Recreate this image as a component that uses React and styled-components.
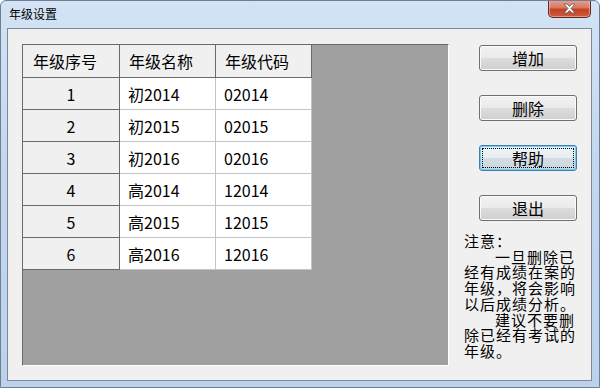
import React from 'react';
import styled, { createGlobalStyle } from 'styled-components';

const GlobalStyle = createGlobalStyle`
  html, body {
    margin: 0;
    padding: 0;
    background: #ffffff;
  }
  body {
    font-family: "Noto Sans CJK SC", "Liberation Sans", sans-serif;
  }
`;

const Window = styled.div`
  width: 600px;
  height: 388px;
  box-sizing: border-box;
  display: flex;
  flex-direction: column;
  background: linear-gradient(180deg, #d3e3f5 0%, #c3d8ef 40%, #bcd2eb 100%);
  border: 1px solid #6e7f94;
  border-radius: 6px 6px 0 0;
  overflow: hidden;
`;

const TitleBar = styled.div`
  height: 27px;
  display: flex;
  align-items: flex-start;
  justify-content: space-between;
  padding-left: 8px;
  padding-right: 8px;
`;

const Title = styled.div`
  font-size: 12px;
  line-height: 12px;
  margin-top: 7px;
  color: #000;
`;

const CloseButton = styled.div`
  width: 43px;
  height: 18px;
  margin-top: -1px;
  box-sizing: border-box;
  border: 1px solid #5a2b24;
  border-top: none;
  border-radius: 0 0 5px 5px;
  background: linear-gradient(180deg, #e8a393 0%, #d9785f 45%, #c44327 55%, #cf5a3c 100%);
  box-shadow: inset 0 0 0 1px rgba(255, 210, 200, 0.5);
  display: flex;
  align-items: center;
  justify-content: center;
`;

const Frame = styled.div`
  flex: 1;
  display: flex;
  padding: 0 7px 6px 6px;
`;

const Client = styled.div`
  flex: 1;
  box-sizing: border-box;
  border: 1px solid #7d8a99;
  background: #f0f0f0;
  display: flex;
  align-items: flex-start;
  padding: 15px 0 0 14px;
`;

const Grid = styled.div`
  width: 427px;
  height: 322px;
  box-sizing: border-box;
  background: #a0a0a0;
  border-top: 1px solid #6a6a6a;
  border-left: 1px solid #6a6a6a;
  border-right: 1px solid #ffffff;
  border-bottom: 1px solid #ffffff;
  display: flex;
  flex-direction: column;
  align-items: flex-start;
`;

const Row = styled.div`
  display: flex;
  height: ${(p) => (p.$header ? 33 : 32)}px;
`;

const Cell = styled.div`
  box-sizing: border-box;
  width: ${(p) => p.$w}px;
  height: 100%;
  display: flex;
  align-items: center;
  justify-content: ${(p) => (p.$center ? 'center' : 'flex-start')};
  padding-left: ${(p) => (p.$center ? 0 : p.$pad)}px;
  font-size: 16px;
  color: #000;
  background: ${(p) => (p.$fixed ? '#f0f0f0' : '#ffffff')};
  border-right: 1px solid ${(p) => (p.$fixed ? '#6a6a6a' : '#c4c4c4')};
  border-bottom: 1px solid ${(p) => (p.$fixed ? '#6a6a6a' : '#c4c4c4')};
  white-space: nowrap;
`;

const Side = styled.div`
  width: 113px;
  margin-left: 15px;
  padding-top: 1px;
  display: flex;
  flex-direction: column;
`;

const Buttons = styled.div`
  display: flex;
  flex-direction: column;
  gap: 24px;
  padding-left: 15px;
`;

const Button = styled.div`
  position: relative;
  width: 98px;
  height: 26px;
  box-sizing: border-box;
  border: 1px solid ${(p) => (p.$focus ? '#3c7fb1' : '#707070')};
  border-radius: 3px;
  background: ${(p) =>
    p.$focus
      ? 'linear-gradient(180deg, #eef3f6 0%, #e6ecf0 50%, #d4dde3 51%, #ccd6dc 100%)'
      : 'linear-gradient(180deg, #f2f2f2 0%, #ebebeb 50%, #dddddd 51%, #cfcfcf 100%)'};
  box-shadow: ${(p) =>
    p.$focus ? 'inset 0 0 0 1px #6fd0f5' : 'inset 0 0 0 1px #fbfbfb'};
  display: flex;
  align-items: center;
  justify-content: center;
  font-size: 16px;
  color: #000;

  &::after {
    content: '';
    display: ${(p) => (p.$focus ? 'block' : 'none')};
    position: absolute;
    inset: 2px;
    border: 1px dotted #000;
  }
`;

const Note = styled.div`
  margin-top: 12px;
  font-size: 15px;
  letter-spacing: 1px;
  line-height: 15.7px;
  color: #000;
  white-space: nowrap;
`;

const NoteLine = styled.div`
  padding-left: ${(p) => (p.$indent ? 31 : 0)}px;
`;

const columns = [
  { title: '年级序号', w: 97 },
  { title: '年级名称', w: 96 },
  { title: '年级代码', w: 96 },
];

const rows = [
  ['1', '初2014', '02014'],
  ['2', '初2015', '02015'],
  ['3', '初2016', '02016'],
  ['4', '高2014', '12014'],
  ['5', '高2015', '12015'],
  ['6', '高2016', '12016'],
];

const noteLines = [
  ['注意：', false],
  ['一旦删除已', true],
  ['经有成绩在案的', false],
  ['年级，将会影响', false],
  ['以后成绩分析。', false],
  ['建议不要删', true],
  ['除已经有考试的', false],
  ['年级。', false],
];

export default function App() {
  return (
    <>
      <GlobalStyle />
      <Window>
        <TitleBar>
          <Title>年级设置</Title>
          <CloseButton>
            <svg width="13" height="11" viewBox="0 0 13 11">
              <path
                d="M1 1 L4 1 L6.5 3.5 L9 1 L12 1 L8 5.5 L12 10 L9 10 L6.5 7.5 L4 10 L1 10 L5 5.5 Z"
                fill="#ffffff"
                stroke="#5b5b5b"
                strokeWidth="0.8"
                strokeLinejoin="round"
              />
            </svg>
          </CloseButton>
        </TitleBar>
        <Frame>
          <Client>
            <Grid>
              <Row $header>
                {columns.map((c) => (
                  <Cell key={c.title} $w={c.w} $fixed $pad={c.w === 97 ? 10 : 9}>
                    {c.title}
                  </Cell>
                ))}
              </Row>
              {rows.map((r) => (
                <Row key={r[0]}>
                  <Cell $w={97} $fixed $center>
                    {r[0]}
                  </Cell>
                  <Cell $w={96} $pad={8}>
                    {r[1]}
                  </Cell>
                  <Cell $w={96} $pad={8}>
                    {r[2]}
                  </Cell>
                </Row>
              ))}
            </Grid>
            <Side>
              <Buttons>
                <Button>增加</Button>
                <Button>删除</Button>
                <Button $focus>帮助</Button>
                <Button>退出</Button>
              </Buttons>
              <Note>
                {noteLines.map(([text, indent]) => (
                  <NoteLine key={text} $indent={indent}>
                    {text}
                  </NoteLine>
                ))}
              </Note>
            </Side>
          </Client>
        </Frame>
      </Window>
    </>
  );
}
